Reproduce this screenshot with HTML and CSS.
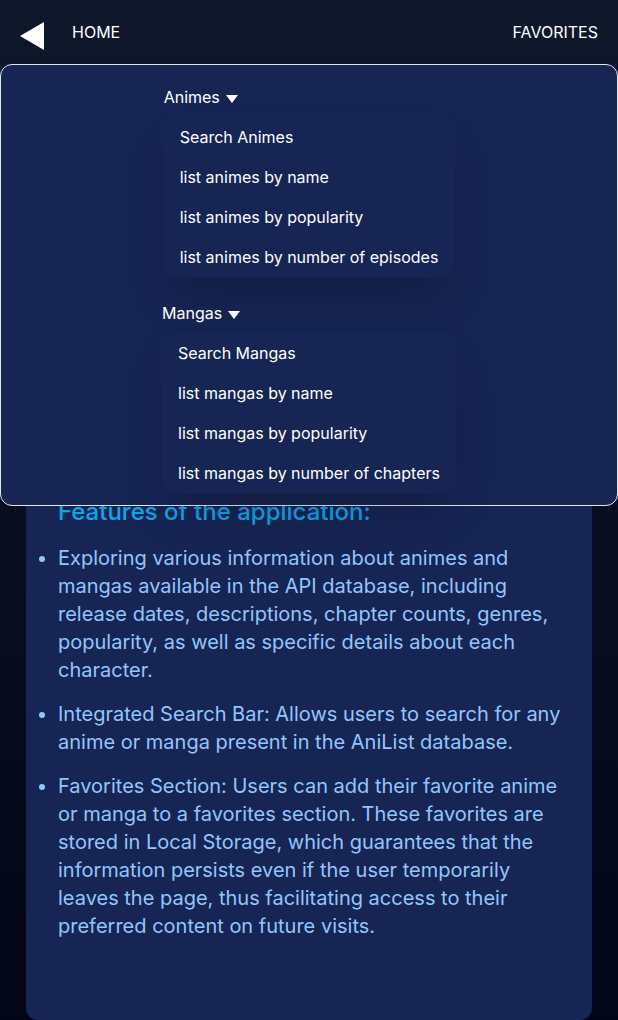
FILE: index.html
```html
<!DOCTYPE html>
<html lang="en">
<head>
<meta charset="utf-8">
<meta name="viewport" content="width=device-width, initial-scale=1">
<title>Animes and Mangas</title>
<link rel="stylesheet" href="styles.css">
</head>
<body>
<header class="header">
  <nav class="nav">
    <button class="menu-button" type="button" aria-label="Toggle menu" aria-expanded="true">
      <svg class="menu-icon" viewBox="0 0 24 28" aria-hidden="true"><path d="M24 0v28L0 14z"/></svg>
    </button>
    <a class="nav-link" href="#">HOME</a>
    <a class="nav-link nav-link-end" href="#">FAVORITES</a>
  </nav>
  <div class="menu">
    <section class="group">
      <button class="group-toggle" type="button" aria-expanded="true">Animes
        <svg class="caret" viewBox="0 0 12 8" aria-hidden="true"><path d="M0 0h12L6 8z"/></svg>
      </button>
      <ul class="submenu">
        <li><a class="submenu-link" href="#">Search Animes</a></li>
        <li><a class="submenu-link" href="#">list animes by name</a></li>
        <li><a class="submenu-link" href="#">list animes by popularity</a></li>
        <li><a class="submenu-link" href="#">list animes by number of episodes</a></li>
      </ul>
    </section>
    <section class="group">
      <button class="group-toggle" type="button" aria-expanded="true">Mangas
        <svg class="caret" viewBox="0 0 12 8" aria-hidden="true"><path d="M0 0h12L6 8z"/></svg>
      </button>
      <ul class="submenu">
        <li><a class="submenu-link" href="#">Search Mangas</a></li>
        <li><a class="submenu-link" href="#">list mangas by name</a></li>
        <li><a class="submenu-link" href="#">list mangas by popularity</a></li>
        <li><a class="submenu-link" href="#">list mangas by number of chapters</a></li>
      </ul>
    </section>
  </div>
</header>
<main class="card">
  <h2 class="card-title">Features of the application:</h2>
  <ul class="features">
    <li>Exploring various information about animes and mangas available in the API database, including release dates, descriptions, chapter counts, genres, popularity, as well as specific details about each character.</li>
    <li>Integrated Search Bar: Allows users to search for any anime or manga present in the AniList database.</li>
    <li>Favorites Section: Users can add their favorite anime or manga to a favorites section. These favorites are stored in Local Storage, which guarantees that the information persists even if the user temporarily leaves the page, thus facilitating access to their preferred content on future visits.</li>
  </ul>
</main>
</body>
</html>
```

FILE: styles.css
```css
* {
  box-sizing: border-box;
}

body {
  margin: 0;
  min-height: 100vh;
  font-family: Inter, "Liberation Sans", sans-serif;
  font-size: 16px;
  line-height: 24px;
  color: #fff;
  background: linear-gradient(to bottom, #0f172a, #020617);
}

.header {
  position: relative;
  z-index: 1;
}

.nav {
  display: flex;
  align-items: center;
  height: 64px;
  padding: 0 20px;
}

.menu-button {
  display: flex;
  margin: 8px 28px 0 0;
  padding: 0;
  border: 0;
  background: none;
}

.menu-icon {
  width: 24px;
  height: 28px;
  fill: #fff;
}

.nav-link,
.submenu-link {
  color: inherit;
  text-decoration: none;
}

.nav-link-end {
  margin-left: auto;
}

/* Open menu, drawn over the page content */
.menu {
  position: absolute;
  top: 100%;
  left: 0;
  right: 0;
  display: flex;
  flex-direction: column;
  align-items: center;
  gap: 16px;
  padding: 12px 0;
  border: 1px solid #e2e8f0;
  border-radius: 12px;
  background: #172554;
}

.group-toggle {
  display: flex;
  align-items: center;
  gap: 6px;
  padding: 8px 0;
  border: 0;
  background: none;
  color: inherit;
  font: inherit;
}

.caret {
  width: 12px;
  height: 8px;
  margin-top: 3px;
  fill: #fff;
}

.submenu {
  margin: 0;
  padding: 0;
  list-style: none;
  border-radius: 12px;
  background: #172554;
  box-shadow: 0 25px 50px -12px rgba(0, 0, 0, 0.25);
}

.submenu-link {
  display: block;
  padding: 8px 16px;
}

.card {
  margin: 0 26px;
  padding: 432px 24px 80px 32px;
  border-radius: 12px;
  background: #172554;
}

.card-title {
  margin: 0 0 16px;
  font-size: 24px;
  line-height: 32px;
  font-weight: 500;
  color: #0ea5e9;
}

.features {
  display: flex;
  flex-direction: column;
  gap: 16px;
  margin: 0;
  padding: 0;
  font-size: 20px;
  line-height: 28px;
  color: #93c5fd;
}
```
